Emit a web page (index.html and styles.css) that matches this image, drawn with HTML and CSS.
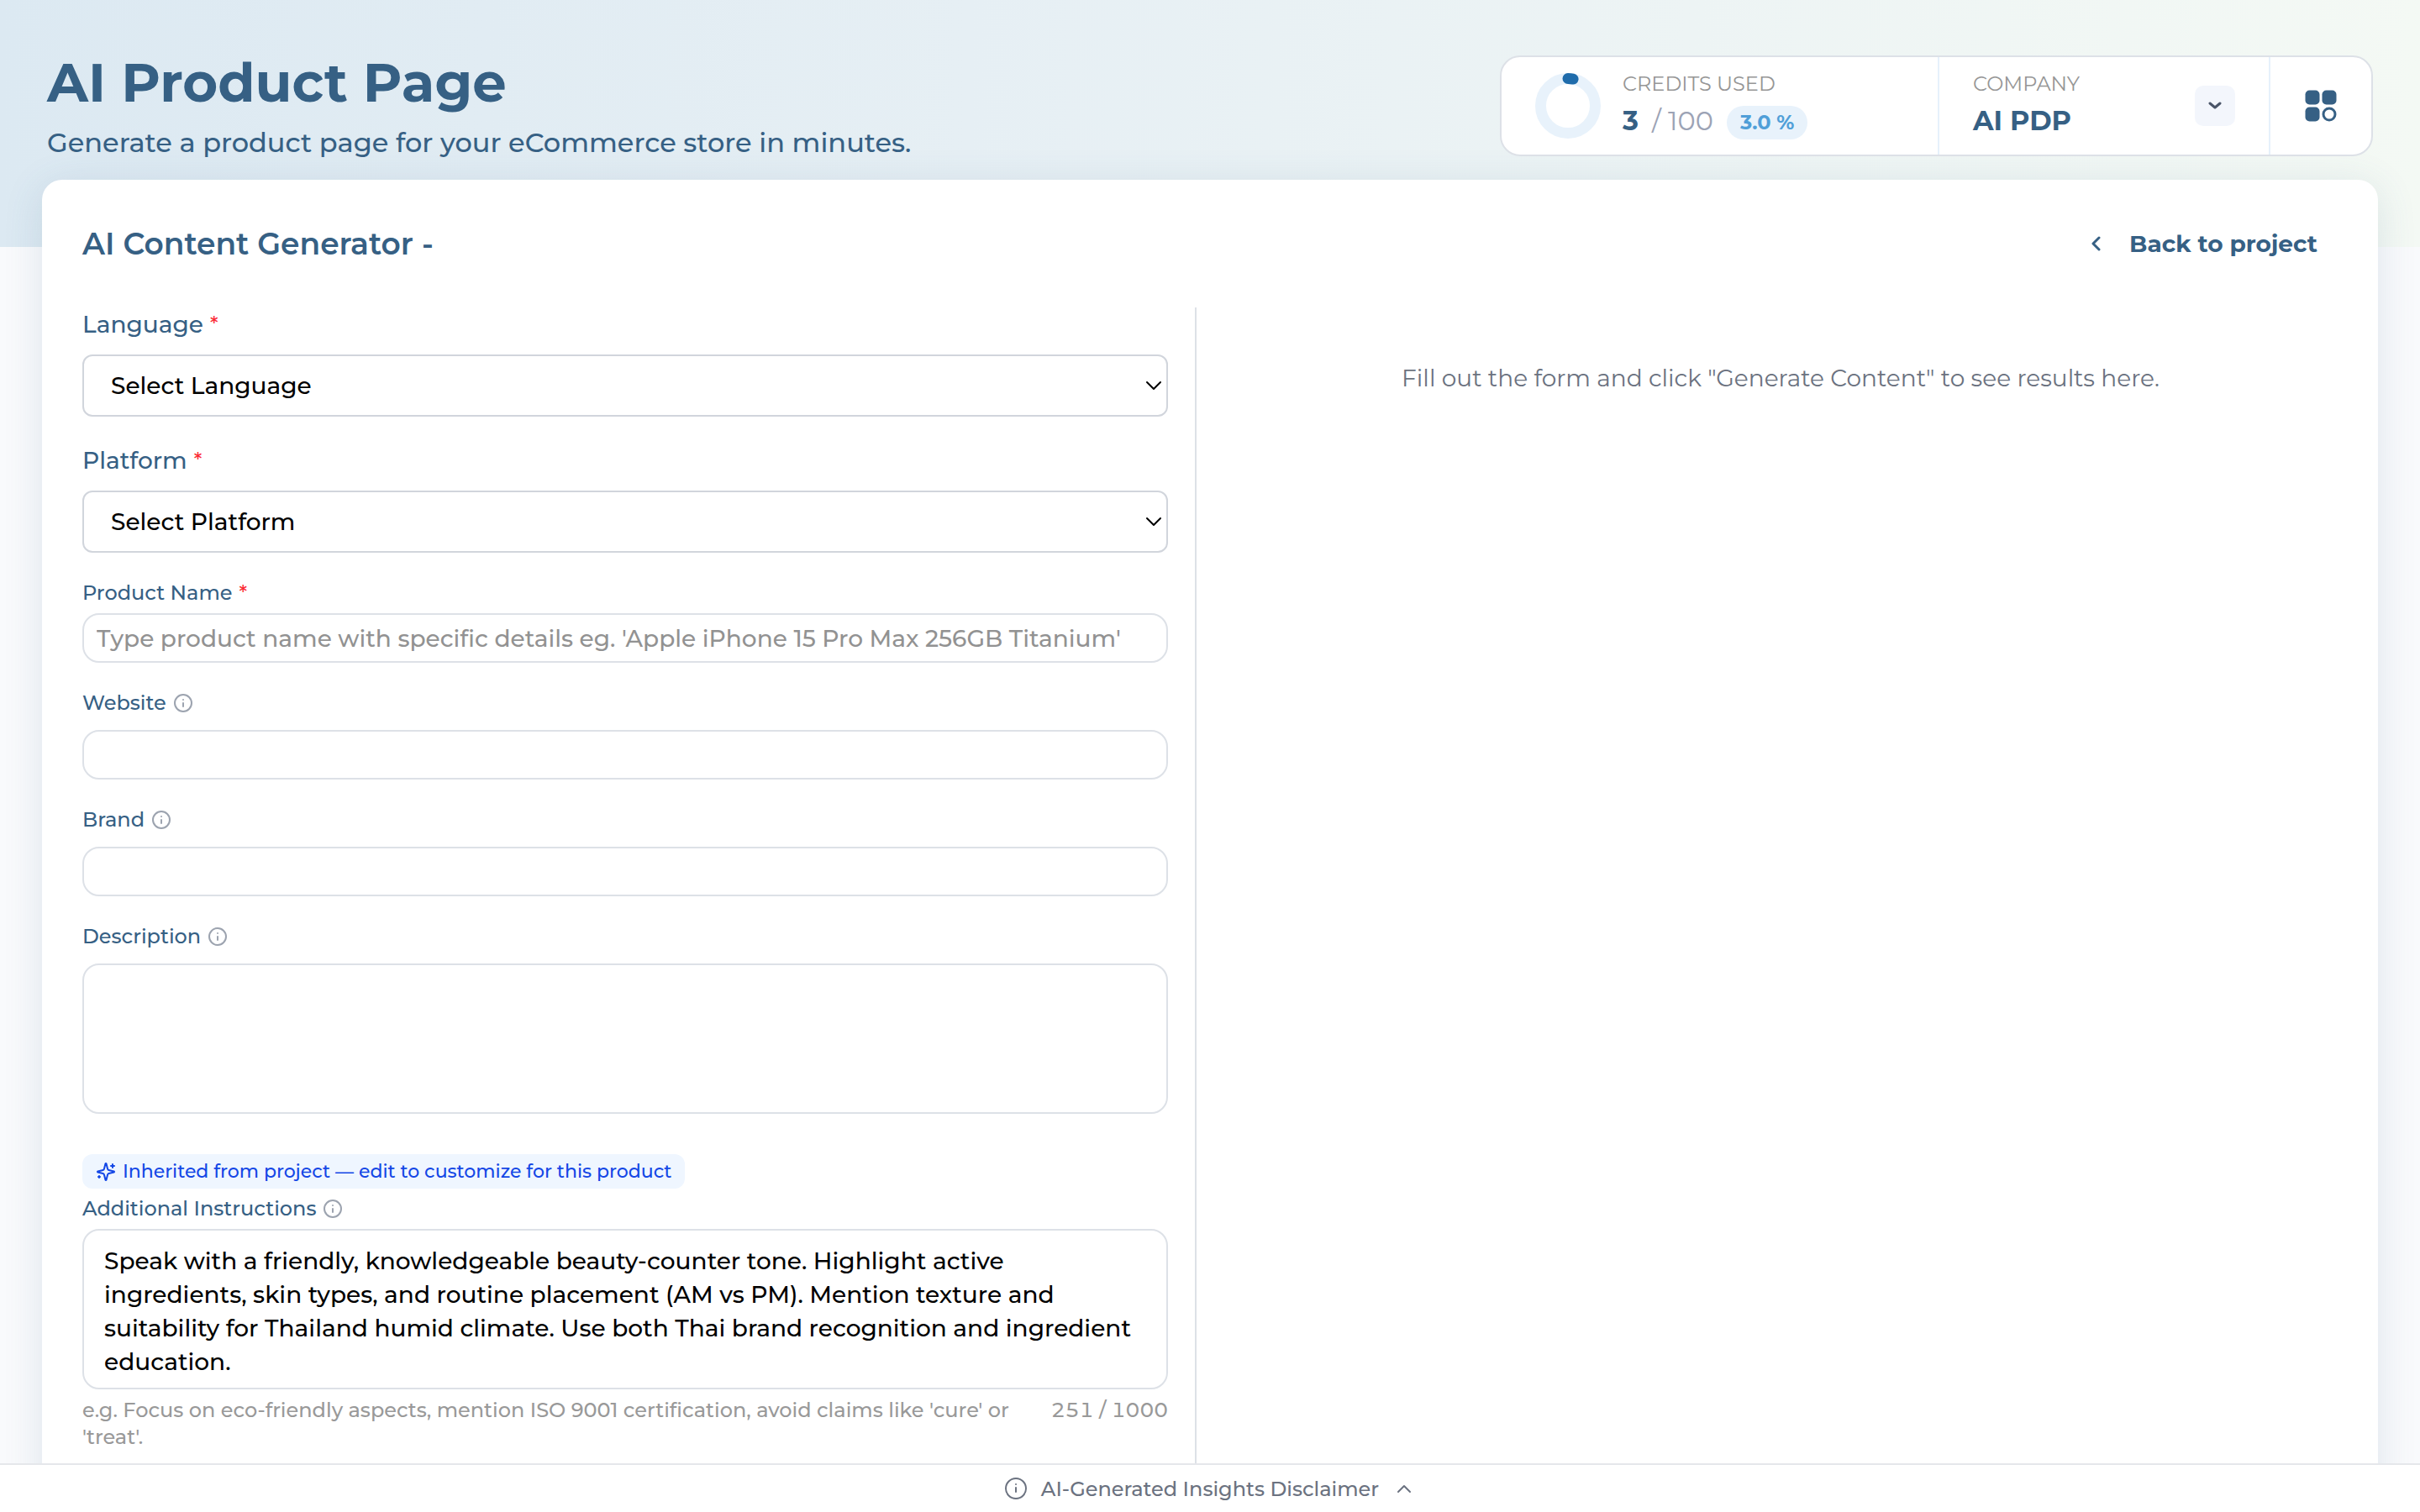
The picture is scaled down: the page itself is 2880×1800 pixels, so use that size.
FILE: index.html
```html
<!DOCTYPE html>
<html lang="en">
  <head>
    <meta charset="UTF-8" />
    <meta name="viewport" content="width=device-width, initial-scale=1.0" />
    <title>AI Product Page</title>
    <link rel="stylesheet" href="styles.css" />
  </head>
  <body>
    <div class="page">
      <header class="pageHeader">
        <div class="pageTitle">
          <h1>AI Product Page</h1>
          <p>Generate a product page for your eCommerce store in minutes.</p>
        </div>
        <div class="statusBar">
          <div class="credits">
            <svg class="ring" viewBox="0 0 78 78" fill="none">
              <circle class="track" cx="39" cy="39" r="32.5" />
              <circle class="used" cx="39" cy="39" r="32.5" stroke-dasharray="6.1 300" transform="rotate(-90 39 39)" />
            </svg>
            <div>
              <div class="statLabel">CREDITS USED</div>
              <div class="creditsRow">
                <strong>3</strong>
                <span class="total">/ 100</span>
                <span class="percent">3.0 %</span>
              </div>
            </div>
          </div>
          <div class="company">
            <div>
              <div class="statLabel">COMPANY</div>
              <div class="companyName">AI PDP</div>
            </div>
            <button class="dropBtn" type="button" aria-label="Change company">
              <svg width="16" height="10" viewBox="0 0 16 10"><path d="M2 2l6 5 6-5" /></svg>
            </button>
          </div>
          <button class="appsBtn" type="button" aria-label="Apps">
            <svg width="38" height="38" viewBox="0 0 38 38">
              <rect x="0.5" y="0.5" width="17" height="17" rx="5" />
              <rect x="20.5" y="0.5" width="17" height="17" rx="5" />
              <rect x="0.5" y="20.5" width="17" height="17" rx="5" />
              <circle cx="29" cy="29" r="7" />
            </svg>
          </button>
        </div>
      </header>

      <main class="card">
        <div class="cardHeader">
          <h2>AI Content Generator -</h2>
          <a class="backLink" href="#">
            <svg width="12" height="18" viewBox="0 0 12 18"><path d="M10 2L3 9l7 7" /></svg>
            Back to project
          </a>
        </div>
        <div class="columns">
          <form class="formCol">
            <div class="field large">
              <label for="language">Language <span class="req">*</span></label>
              <div class="selectWrap">
                <select id="language">
                  <option>Select Language</option>
                </select>
                <svg class="arrow" width="20" height="12" viewBox="0 0 20 12"><path d="M2 2l8 8 8-8" /></svg>
              </div>
            </div>
            <div class="field large">
              <label for="platform">Platform <span class="req">*</span></label>
              <div class="selectWrap">
                <select id="platform">
                  <option>Select Platform</option>
                </select>
                <svg class="arrow" width="20" height="12" viewBox="0 0 20 12"><path d="M2 2l8 8 8-8" /></svg>
              </div>
            </div>
            <div class="field tight">
              <label for="productName">Product Name <span class="req">*</span></label>
              <input type="text" id="productName" placeholder="Type product name with specific details eg. 'Apple iPhone 15 Pro Max 256GB Titanium'" />
            </div>
            <div class="field">
              <label for="website">Website
                <svg class="info" viewBox="0 0 24 24"><circle cx="12" cy="12" r="10" /><path d="M12 16v-4M12 8h.01" /></svg>
              </label>
              <input type="text" id="website" />
            </div>
            <div class="field">
              <label for="brand">Brand
                <svg class="info" viewBox="0 0 24 24"><circle cx="12" cy="12" r="10" /><path d="M12 16v-4M12 8h.01" /></svg>
              </label>
              <input type="text" id="brand" />
            </div>
            <div class="field">
              <label for="description">Description
                <svg class="info" viewBox="0 0 24 24"><circle cx="12" cy="12" r="10" /><path d="M12 16v-4M12 8h.01" /></svg>
              </label>
              <textarea id="description" class="description"></textarea>
            </div>
            <div class="field tight instructions">
              <div class="inherited">
                <svg width="24" height="24" viewBox="0 0 24 24">
                  <path d="M9.937 15.5A2 2 0 0 0 8.5 14.063l-6.135-1.582a.5.5 0 0 1 0-.962L8.5 9.936A2 2 0 0 0 9.937 8.5l1.582-6.135a.5.5 0 0 1 .963 0L14.063 8.5A2 2 0 0 0 15.5 9.937l6.135 1.581a.5.5 0 0 1 0 .964L15.5 14.063a2 2 0 0 0-1.437 1.437l-1.582 6.135a.5.5 0 0 1-.963 0z" />
                  <path d="M20 3v4M22 5h-4M4 17v2M5 18H3" />
                </svg>
                Inherited from project — edit to customize for this product
              </div>
              <label for="instructions">Additional Instructions
                <svg class="info" viewBox="0 0 24 24"><circle cx="12" cy="12" r="10" /><path d="M12 16v-4M12 8h.01" /></svg>
              </label>
              <textarea id="instructions" class="notes">Speak with a friendly, knowledgeable beauty-counter tone. Highlight active ingredients, skin types, and routine placement (AM vs PM). Mention texture and suitability for Thailand humid climate. Use both Thai brand recognition and ingredient education.</textarea>
              <div class="hintRow">
                <p>e.g. Focus on eco-friendly aspects, mention ISO 9001 certification, avoid claims like 'cure' or 'treat'.</p>
                <span class="counter">251 / 1000</span>
              </div>
            </div>
          </form>
          <section class="resultCol">
            <p>Fill out the form and click "Generate Content" to see results here.</p>
          </section>
        </div>
      </main>
    </div>

    <footer class="disclaimer">
      <button type="button">
        <svg width="28" height="28" viewBox="0 0 28 28"><circle cx="14" cy="14" r="12" /><path d="M14 18v-5M14 9h.01" /></svg>
        AI-Generated Insights Disclaimer
        <svg width="28" height="28" viewBox="0 0 28 28"><path d="M21 18l-7-7-7 7" /></svg>
      </button>
    </footer>
  </body>
</html>
```
FILE: styles.css
```css
* {
  padding: 0;
  margin: 0;
  box-sizing: border-box;
}
body {
  height: 100vh;
  display: flex;
  flex-direction: column;
  font-family: Montserrat, Inter, "Liberation Sans", sans-serif;
  font-size: 28px;
  color: #366084;
  background: #f9fafc;
}
button,
input,
select,
textarea {
  font: inherit;
}
svg {
  flex: none;
  fill: none;
  stroke: currentColor;
  stroke-width: 2;
  stroke-linecap: round;
  stroke-linejoin: round;
}

/* header */
.page {
  flex: 1;
  min-height: 0;
  overflow: hidden;
  background: linear-gradient(90deg, #dce9f2, #e6eff4 40%, #f4f9f4) no-repeat;
  background-size: 100% 294px;
}
.pageHeader {
  display: flex;
  align-items: flex-start;
  justify-content: space-between;
  padding: 58px 56px 22px;
}
.pageTitle h1 {
  font-size: 64px;
  line-height: 80px;
  font-weight: 700;
  margin-bottom: 10px;
}
.pageTitle p {
  font-size: 32px;
  line-height: 44px;
  font-weight: 500;
}
.statusBar {
  display: flex;
  height: 120px;
  margin-top: 8px;
  background: #fff;
  border: 2px solid #dde1e7;
  border-radius: 24px;
}
.credits {
  display: flex;
  align-items: center;
  gap: 26px;
  width: 521px;
  padding: 0 40px;
  border-right: 2px solid #e6f1fb;
}
.ring {
  width: 78px;
  height: 78px;
}
.ring circle {
  stroke-width: 13;
}
.ring .track {
  stroke: #e8f2fb;
}
.ring .used {
  stroke: #1f6cab;
}
.statLabel {
  font-size: 24px;
  line-height: 28px;
  color: #969696;
  margin-bottom: 12px;
}
.creditsRow {
  display: flex;
  align-items: flex-start;
  font-size: 32px;
  line-height: 36px;
}
.total {
  color: #9ca3b5;
  margin: 0 16px;
}
.percent {
  font-size: 24px;
  line-height: 40px;
  font-weight: 700;
  color: #509fd8;
  background: #e8f2fb;
  border-radius: 20px;
  padding: 0 16px;
}
.company {
  display: flex;
  align-items: center;
  justify-content: space-between;
  width: 394px;
  padding: 0 40px;
  border-right: 2px solid #e6f1fb;
}
.companyName {
  font-size: 32px;
  line-height: 36px;
  font-weight: 700;
  margin-bottom: 4px;
}
.dropBtn {
  display: flex;
  align-items: center;
  justify-content: center;
  width: 48px;
  height: 48px;
  border: none;
  border-radius: 10px;
  background: #f3f6fc;
  color: #4a5568;
}
.dropBtn svg {
  stroke-width: 3;
}
.appsBtn {
  display: flex;
  align-items: center;
  justify-content: center;
  width: 120px;
  border: none;
  background: none;
  color: #366084;
}
.appsBtn rect {
  fill: currentColor;
  stroke: none;
}
.appsBtn circle {
  stroke-width: 3;
}

/* main card */
.card {
  margin: 0 50px;
  padding: 48px;
  background: #fff;
  border-radius: 24px;
  box-shadow: 0 8px 48px rgba(54, 96, 132, 0.14);
}
.cardHeader {
  display: flex;
  align-items: center;
  justify-content: space-between;
  height: 56px;
  margin-bottom: 48px;
}
.cardHeader h2 {
  font-size: 36px;
  font-weight: 600;
}
.backLink {
  display: flex;
  align-items: center;
  gap: 34px;
  padding: 0 24px;
  font-weight: 700;
  color: #366084;
  text-decoration: none;
}
.backLink svg {
  stroke-width: 3;
}
.columns {
  display: grid;
  grid-template-columns: 1fr 1fr;
  gap: 32px;
}
.formCol {
  padding-right: 32px;
  padding-bottom: 120px;
  border-right: 2px solid #dde1e7;
}
.field {
  margin-bottom: 32px;
}
.field label {
  display: flex;
  align-items: center;
  gap: 8px;
  font-size: 24px;
  line-height: 32px;
  font-weight: 500;
  margin-bottom: 16px;
}
.field.tight label {
  margin-bottom: 8px;
}
.field.large label {
  font-size: 28px;
  line-height: 40px;
}
.req {
  color: #fb2c36;
  font-size: 24px;
}
.info {
  width: 24px;
  height: 24px;
  color: #9ca3af;
}
.selectWrap {
  position: relative;
}
.selectWrap select {
  display: block;
  appearance: none;
  width: 100%;
  height: 74px;
  padding: 0 32px;
  font-weight: 500;
  color: #000;
  background: #fff;
  border: 2px solid #d1d5dc;
  border-radius: 12px;
}
.arrow {
  position: absolute;
  right: 7px;
  top: 31px;
  color: #000;
  pointer-events: none;
}
.field input,
.field textarea {
  display: block;
  width: 100%;
  color: #000;
  font-weight: 500;
  background: #fff;
  border: 2px solid #dde1e7;
  border-radius: 20px;
  outline: none;
}
.field input {
  height: 59px;
  padding: 0 15px;
}
.field input::placeholder {
  color: #929292;
}
.field textarea {
  padding: 16px 24px;
  line-height: 40px;
  resize: none;
  overflow: hidden;
}
.description {
  height: 179px;
}
.notes {
  height: 191px;
}
.instructions {
  margin-top: 48px;
}
.inherited {
  display: inline-flex;
  align-items: center;
  gap: 8px;
  height: 41px;
  padding: 0 16px;
  margin-bottom: 8px;
  font-size: 22px;
  font-weight: 500;
  color: #1447e6;
  background: #eff6ff;
  border-radius: 12px;
}
.hintRow {
  display: flex;
  justify-content: space-between;
  gap: 32px;
  margin-top: 9px;
  font-size: 24px;
  line-height: 32px;
  font-weight: 500;
  color: #999;
}
.counter {
  white-space: nowrap;
  font-variant-numeric: tabular-nums;
}
.resultCol {
  padding-top: 64px;
  line-height: 40px;
  text-align: center;
  color: #6b7280;
}

/* footer */
.disclaimer {
  display: flex;
  justify-content: center;
  height: 58px;
  background: #fff;
  border-top: 2px solid #e5e7eb;
}
.disclaimer button {
  display: flex;
  align-items: center;
  gap: 16px;
  border: none;
  background: none;
  font-size: 24px;
  font-weight: 500;
  color: #6b7280;
}
```
